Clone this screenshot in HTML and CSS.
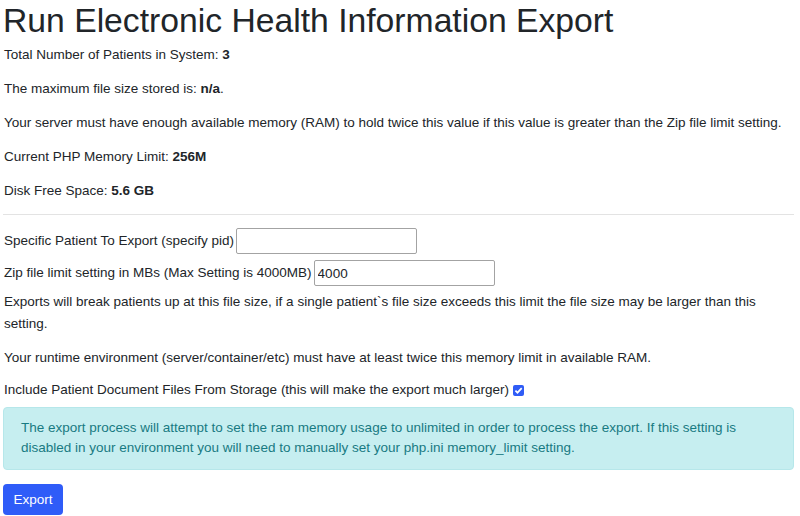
FILE: index.html
```html
<!DOCTYPE html>
<html>
<head>
<meta charset="utf-8">
<link rel="stylesheet" href="styles.css">
</head>
<body>
<div class="page">
  <h1 class="title">Run Electronic Health Information Export</h1>
  <p class="line">Total Number of Patients in System: <b>3</b></p>
  <p class="line">The maximum file size stored is: <b>n/a</b>.</p>
  <p class="line">Your server must have enough available memory (RAM) to hold twice this value if this value is greater than the Zip file limit setting.</p>
  <p class="line">Current PHP Memory Limit: <b>256M</b></p>
  <p class="line">Disk Free Space: <b>5.6 GB</b></p>
  <hr class="sep">
  <form class="form">
    <div class="field">
      <label class="lbl" for="pid">Specific Patient To Export (specify pid)</label>
      <input class="inp" id="pid" type="text">
    </div>
    <div class="field">
      <label class="lbl" for="zip">Zip file limit setting in MBs (Max Setting is 4000MB)</label>
      <input class="inp" id="zip" type="text" value="4000">
    </div>
    <p class="line">Exports will break patients up at this file size, if a single patient`s file size exceeds this limit the file size may be larger than this setting.</p>
    <p class="line">Your runtime environment (server/container/etc) must have at least twice this memory limit in available RAM.</p>
    <div class="field">
      <label class="lbl" for="docs">Include Patient Document Files From Storage (this will make the export much larger)</label>
      <span class="check"><svg width="11" height="11" viewBox="0 0 11 11"><rect x="0" y="0" width="11" height="11" rx="2" fill="#2f5cf6"/><path d="M2.4 5.6 L4.5 7.7 L8.7 3.2" fill="none" stroke="#fff" stroke-width="1.7"/></svg></span>
    </div>
    <div class="alert">The export process will attempt to set the ram memory usage to unlimited in order to process the export. If this setting is disabled in your environment you will need to manually set your php.ini memory_limit setting.</div>
    <button class="btn" type="button">Export</button>
  </form>
</div>
</body>
</html>
```
FILE: styles.css
```css
html, body {
  margin: 0;
  padding: 0;
  background: #fff;
}
body {
  font-family: "Liberation Sans", Arial, sans-serif;
  font-size: 13.5px;
  color: #212529;
}
.page {
  padding: 0 4px;
}
.title {
  font-size: 33.7px;
  font-weight: 400;
  line-height: 40px;
  margin: 0 0 4px -1px;
  color: #212529;
}
.line {
  margin: 0 0 12px;
  line-height: 22px;
}
.line b {
  font-weight: 700;
}
.sep {
  border: 0;
  border-top: 1px solid #e3e3e3;
  margin: 12px 2px 13px -1px;
}
.field {
  display: flex;
  align-items: center;
  gap: 2px;
  margin-bottom: 6px;
  line-height: 22px;
}
.field + .line {
  margin-top: -1px;
}
.line + .field {
  margin-top: -2px;
}
.inp {
  width: 173px;
  height: 24px;
  border: 1px solid #a3a3a3;
  border-radius: 2px;
  padding: 0 3px;
  font-family: "Liberation Sans", Arial, sans-serif;
  font-size: 13.5px;
  color: #212529;
  box-sizing: content-box;
}
.check {
  display: inline-flex;
  margin-left: 2px;
}
.alert {
  background: #c6eef0;
  border: 1px solid #b6e7ea;
  border-radius: 4px;
  color: #187a82;
  padding: 10px 20px 11px 17px;
  line-height: 20px;
  margin: 5px 2px 14px -1px;
}
.btn {
  background: #2f5cf8;
  color: #fff;
  border: 0;
  border-radius: 4px;
  padding: 0 10.5px;
  height: 31px;
  font-family: "Liberation Sans", Arial, sans-serif;
  font-size: 13.5px;
  margin-left: -1px;
}
```
